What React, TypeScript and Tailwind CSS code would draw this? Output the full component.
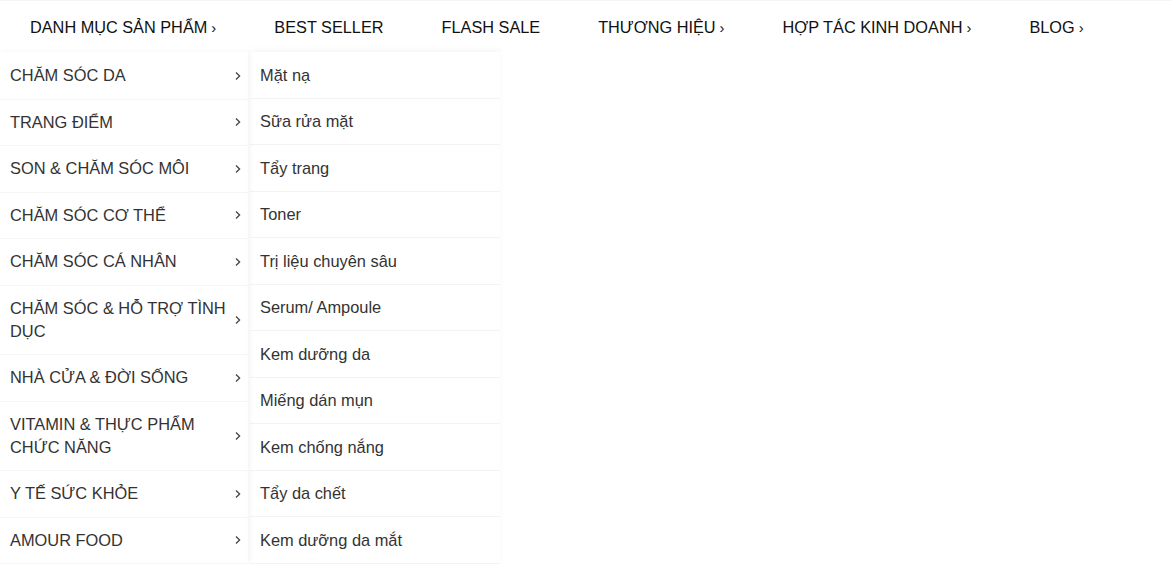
const NAV = [
  { label: "DANH MỤC SẢN PHẨM", arrow: true },
  { label: "BEST SELLER", arrow: false },
  { label: "FLASH SALE", arrow: false },
  { label: "THƯƠNG HIỆU", arrow: true },
  { label: "HỢP TÁC KINH DOANH", arrow: true },
  { label: "BLOG", arrow: true },
];

const CATEGORIES = [
  "CHĂM SÓC DA",
  "TRANG ĐIỂM",
  "SON & CHĂM SÓC MÔI",
  "CHĂM SÓC CƠ THỂ",
  "CHĂM SÓC CÁ NHÂN",
  "CHĂM SÓC & HỖ TRỢ TÌNH DỤC",
  "NHÀ CỬA & ĐỜI SỐNG",
  "VITAMIN & THỰC PHẨM CHỨC NĂNG",
  "Y TẾ SỨC KHỎE",
  "AMOUR FOOD",
];

const SUBS = [
  "Mặt nạ",
  "Sữa rửa mặt",
  "Tẩy trang",
  "Toner",
  "Trị liệu chuyên sâu",
  "Serum/ Ampoule",
  "Kem dưỡng da",
  "Miếng dán mụn",
  "Kem chống nắng",
  "Tẩy da chết",
  "Kem dưỡng da mắt",
];

function Chevron() {
  return (
    <svg width="6" height="10" viewBox="0 0 6 10" className="shrink-0">
      <path d="M1 1.5 L4.6 5 L1 8.5" fill="none" stroke="#444" strokeWidth="1.3" />
    </svg>
  );
}

export default function App() {
  return (
    <div
      className="w-[1171px] h-[564px] bg-white overflow-hidden text-[#333]"
      style={{ fontFamily: '"Liberation Sans", Arial, sans-serif' }}
    >
      <nav className="h-[52px] flex items-center gap-[58px] pl-[30px] pt-[2px] border-t border-[#f4f4f4]">
        {NAV.map((item) => (
          <div key={item.label} className="flex items-center gap-[4px] text-[16.3px] text-[#111]">
            <span>{item.label}</span>
            {item.arrow && <span className="text-[15px] leading-none">›</span>}
          </div>
        ))}
      </nav>

      <div className="flex">
        <ul className="w-[248px] pt-[1px] shadow-[2px_0_6px_rgba(0,0,0,0.04)] relative z-10">
          {CATEGORIES.map((cat) => (
            <li
              key={cat}
              className="flex items-center justify-between pl-[10px] pr-[7px] py-[11.25px] border-b border-[#f5f5f5] text-[16.4px] leading-[23px]"
            >
              <span className="pr-[4px]">{cat}</span>
              <Chevron />
            </li>
          ))}
        </ul>
        <ul className="w-[250px] ml-[2px] shadow-[0_-3px_6px_rgba(0,0,0,0.03)]">
          {SUBS.map((sub) => (
            <li
              key={sub}
              className="flex items-center pl-[10px] h-[46.5px] pt-[1px] border-b border-[#f3f3f3] text-[16.4px]"
            >
              {sub}
            </li>
          ))}
        </ul>
      </div>
    </div>
  );
}
